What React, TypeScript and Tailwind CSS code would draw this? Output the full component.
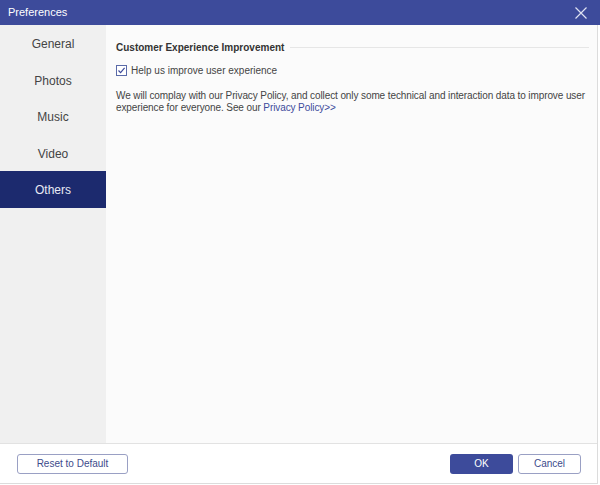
export default function App() {
  const tabs = ["General", "Photos", "Music", "Video", "Others"];
  const active = "Others";

  return (
    <div className="w-[600px] h-[485px] flex flex-col bg-white font-['Liberation_Sans',Arial,sans-serif] overflow-hidden">
      {/* Title bar */}
      <div className="h-[25px] shrink-0 bg-[#3d4b9b] flex items-center justify-between pl-[8px] pr-[13px]">
        <span className="text-[11px] text-white">Preferences</span>
        <svg width="12" height="12" viewBox="0 0 12 12" className="text-[#dfe2f2]">
          <path d="M0.5 0.5 L11.5 11.5 M11.5 0.5 L0.5 11.5" stroke="currentColor" strokeWidth="1.2" />
        </svg>
      </div>

      <div className="flex-1 flex border-r border-b border-[#dcdcdc] min-h-0 mb-[1px] mr-[2px]">
        <div className="flex-1 flex flex-col min-w-0">
          <div className="flex-1 flex min-h-0">
            {/* Sidebar */}
            <div className="w-[106px] shrink-0 bg-[#f0f0f0] flex flex-col">
              {tabs.map((t) => (
                <div
                  key={t}
                  className={
                    t === active
                      ? "h-[36.5px] flex items-center justify-center pt-[2px] text-[12px] bg-[#1c2a6e] text-[#e8eaf4]"
                      : "h-[36.5px] flex items-center justify-center pt-[2px] text-[12px] text-[#444]"
                  }
                >
                  {t}
                </div>
              ))}
            </div>

            {/* Main */}
            <div className="flex-1 bg-[#fbfbfb] pl-[10px] pr-[8px] pt-[15px]">
              <div className="flex items-center gap-[6px]">
                <span className="text-[10px] font-bold text-[#333] whitespace-nowrap">Customer Experience Improvement</span>
                <div className="flex-1 h-px bg-[#e6e6e6]" />
              </div>
              <label className="flex items-center gap-[4px] mt-[8px]">
                <span className="w-[11px] h-[11px] border border-[#5a6aa8] bg-white flex items-center justify-center">
                  <svg width="9" height="9" viewBox="0 0 9 9">
                    <path d="M1.5 4.5 L3.6 6.7 L7.6 1.8" fill="none" stroke="#3d4b9b" strokeWidth="1.2" />
                  </svg>
                </span>
                <span className="text-[10px] text-[#444]">Help us improve user experience</span>
              </label>
              <p className="mt-[12px] text-[10px] leading-[12px] tracking-[-0.1px] text-[#444]">
                We will complay with our Privacy Policy, and collect only some technical and interaction data to improve user experience for everyone. See our{" "}
                <span className="text-[#3d4b9b]">Privacy Policy&gt;&gt;</span>
              </p>
            </div>
          </div>

          {/* Footer */}
          <div className="h-[40px] shrink-0 border-t border-[#e2e2e2] bg-white flex items-center justify-between pl-[17px] pr-[16px]">
            <button className="w-[111px] h-[20px] rounded-[3px] border border-[#9aa0c4] text-[10px] text-[#3d4b8b] bg-white">
              Reset to Default
            </button>
            <div className="flex gap-[5px]">
              <button className="w-[63px] h-[20px] rounded-[3px] bg-[#3d4b9b] text-[10px] text-white">OK</button>
              <button className="w-[63px] h-[20px] rounded-[3px] border border-[#9aa0c4] text-[10px] text-[#3d4b8b] bg-white">
                Cancel
              </button>
            </div>
          </div>
        </div>
      </div>
    </div>
  );
}
